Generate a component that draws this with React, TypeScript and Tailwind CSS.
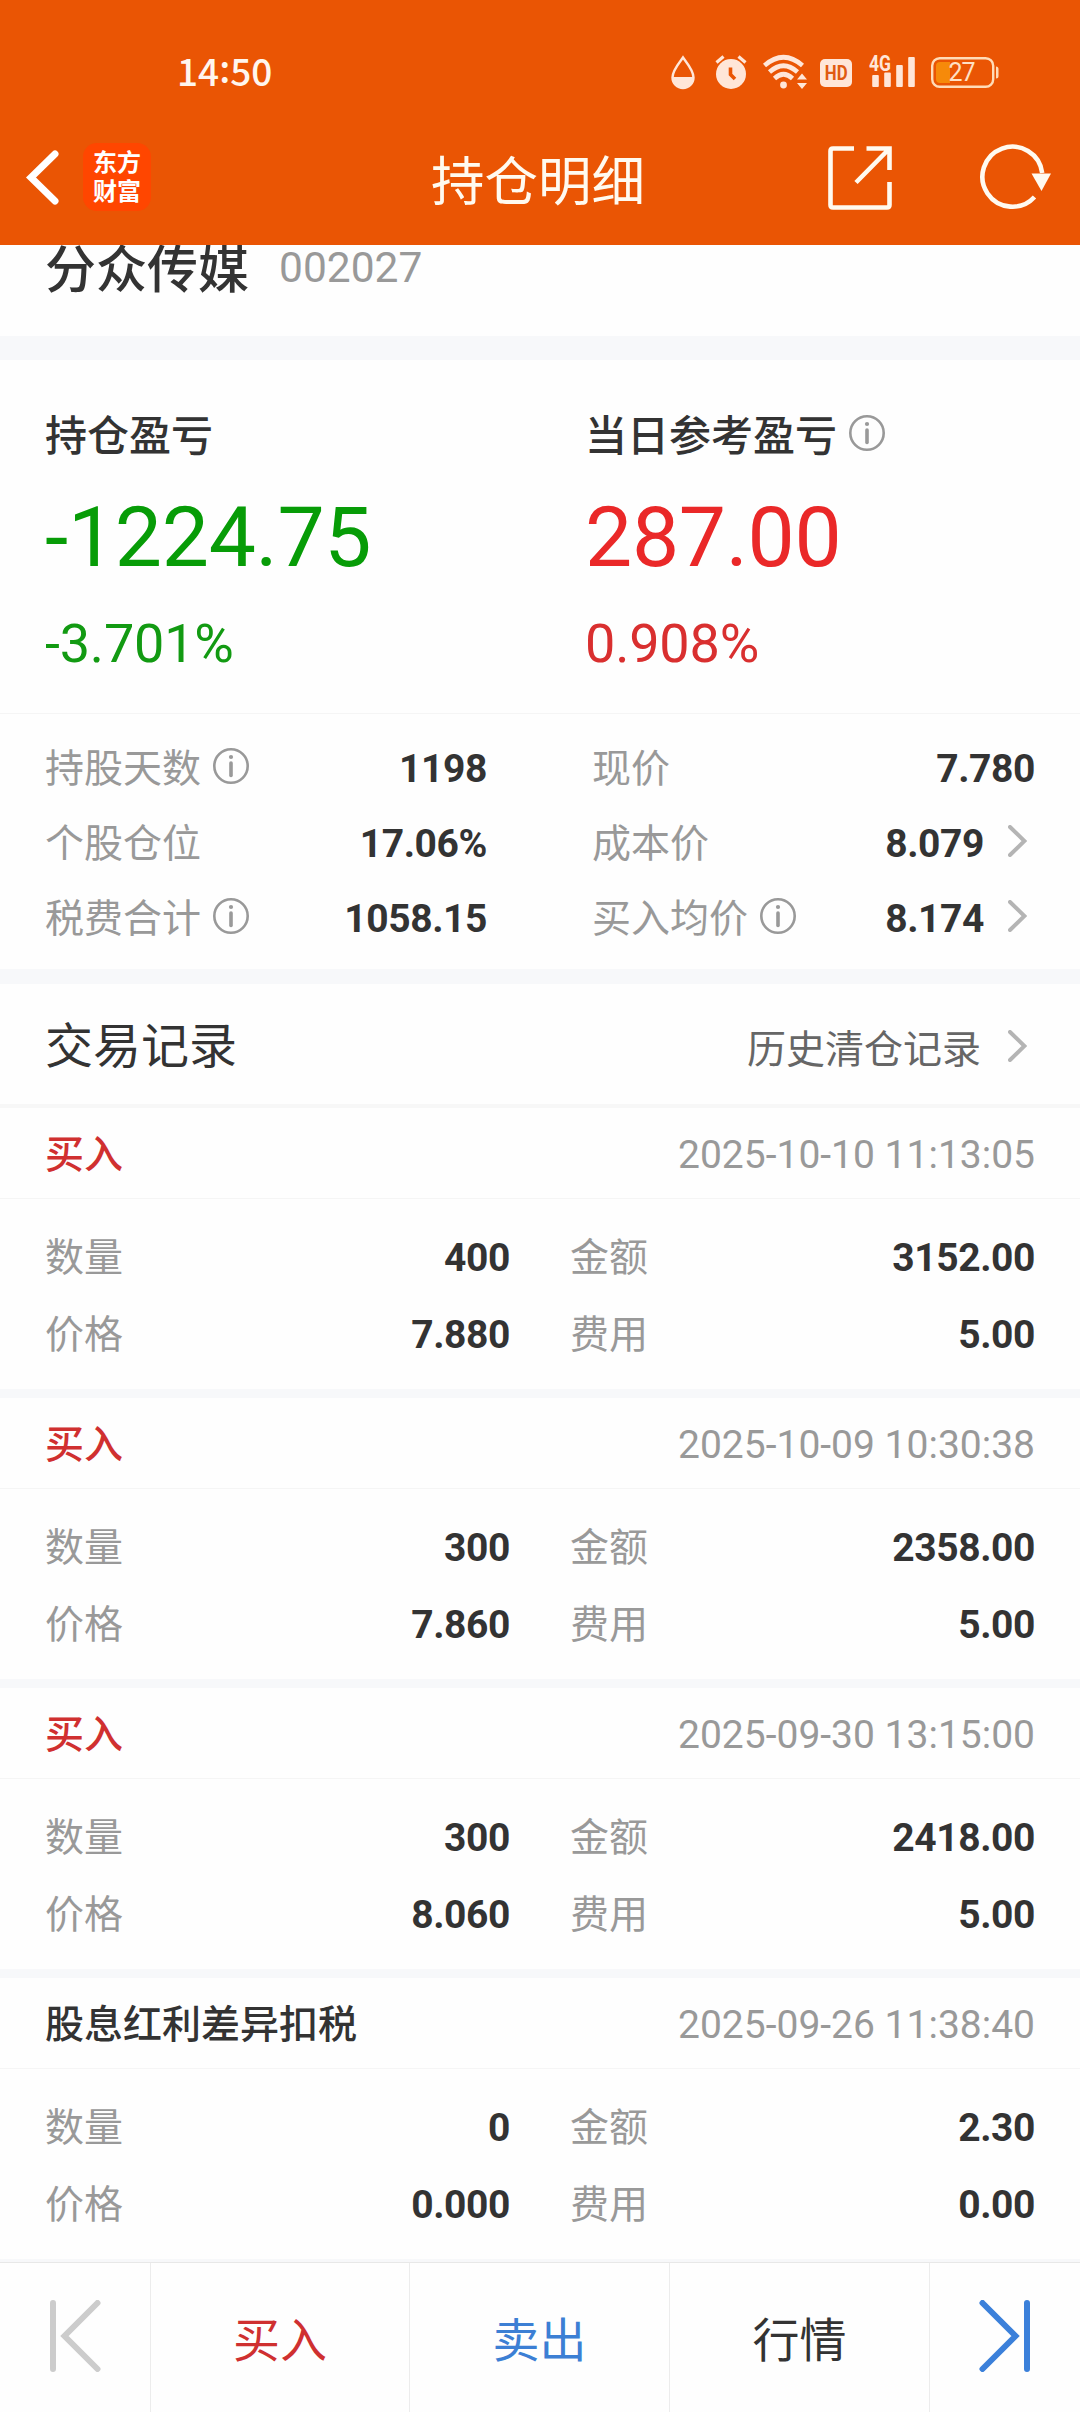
import React from "react";

type Metric = { label: string; value: string; info?: boolean; link?: boolean };

const leftMetrics: Metric[] = [
  { label: "持股天数", value: "1198", info: true },
  { label: "个股仓位", value: "17.06%" },
  { label: "税费合计", value: "1058.15", info: true },
];

const rightMetrics: Metric[] = [
  { label: "现价", value: "7.780" },
  { label: "成本价", value: "8.079", link: true },
  { label: "买入均价", value: "8.174", info: true, link: true },
];

const records = [
  { title: "买入", buy: true, time: "2025-10-10 11:13:05", qty: "400", amount: "3152.00", price: "7.880", fee: "5.00" },
  { title: "买入", buy: true, time: "2025-10-09 10:30:38", qty: "300", amount: "2358.00", price: "7.860", fee: "5.00" },
  { title: "买入", buy: true, time: "2025-09-30 13:15:00", qty: "300", amount: "2418.00", price: "8.060", fee: "5.00" },
  { title: "股息红利差异扣税", buy: false, time: "2025-09-26 11:38:40", qty: "0", amount: "2.30", price: "0.000", fee: "0.00" },
];

function InfoIcon({ className = "" }: { className?: string }) {
  return (
    <svg className={`h-9 w-9 shrink-0 ${className}`} viewBox="0 0 36 36" fill="none" stroke="#999" strokeLinecap="round">
      <circle cx="18" cy="18" r="16.7" strokeWidth="2.6" />
      <path d="M18 15V27.5" strokeWidth="3.6" />
      <circle cx="18" cy="9" r="2.1" fill="#999" stroke="none" />
    </svg>
  );
}

function ChevronRight({ className = "" }: { className?: string }) {
  return (
    <svg className={`h-8 w-[19px] shrink-0 ${className}`} viewBox="0 0 19 32" fill="none" stroke="#b4b4b4" strokeWidth="4" strokeLinecap="round">
      <path d="M2 2L16.4 16L2 30" />
    </svg>
  );
}

function StatusBar() {
  return (
    <div className="flex h-[110px] items-start pl-[177px] pt-[52px] text-[#ffe6d8]">
      <div className="mt-[-8px] w-[493px] font-['Noto_Sans_CJK_SC',sans-serif] text-[37px] font-medium leading-[52px] text-[#fff6ee]">
        14<span className="relative top-[-3px]">:</span>50
      </div>
      <svg className="h-10 w-[26px]" viewBox="0 0 26 40">
        <path d="M13 5.5C16 10 23.5 18 23.5 25.5A10.5 10.5 0 0 1 2.5 25.5C2.5 18 10 10 13 5.5Z" fill="none" stroke="currentColor" strokeWidth="2.4" />
        <path d="M2 25H24A11 11 0 0 1 2 25Z" fill="currentColor" />
      </svg>
      <svg className="ml-[18px] h-10 w-[34px]" viewBox="0 0 34 40">
        <circle cx="17" cy="22" r="15" fill="currentColor" />
        <path d="M2.5 10.5L9.5 4.5M31.5 10.5L24.5 4.5" stroke="currentColor" strokeWidth="3.2" />
        <path d="M16.5 15.5V22.5L21 27" fill="none" stroke="#ea5504" strokeWidth="3.6" />
      </svg>
      <svg className="ml-[14px] h-10 w-[46px]" viewBox="0 0 46 40">
        <g fill="none" stroke="currentColor" strokeWidth="4.6">
          <path d="M2.5 13.5Q21.5 -3 40.5 13.5" />
          <path d="M7.5 20Q21.5 7.5 35.5 20" />
          <path d="M12.5 26.5Q21.5 18 30.5 26.5" />
        </g>
        <circle cx="21.5" cy="33" r="3.4" fill="currentColor" />
        <path d="M35 27.5L40 21.5L45 27.5ZM35 31H45L40 37Z" fill="currentColor" />
      </svg>
      <div className="ml-[12px] mt-[7px] flex h-7 w-8 items-center justify-center rounded-[5px] bg-[#ffe6d8] font-[Roboto,sans-serif] text-[21px] font-bold leading-none text-[#e05a10]">
        <span className="scale-x-[0.8]">HD</span>
      </div>
      <svg className="ml-[16px] h-10 w-[48px]" viewBox="0 0 48 40" fill="currentColor">
        <text x="1" y="18.5" fontFamily="Roboto, sans-serif" fontWeight="700" fontSize="21.5" textLength="22" lengthAdjust="spacingAndGlyphs">4G</text>
        <rect x="4.2" y="23" width="6.6" height="12" rx="1" />
        <rect x="16.2" y="20.5" width="6.6" height="14.5" rx="1" />
        <rect x="28.2" y="13" width="6.6" height="22" rx="1" />
        <rect x="40.2" y="5" width="6.6" height="30" rx="1" />
      </svg>
      <svg className="ml-[14px] h-10 w-[70px]" viewBox="0 0 70 40">
        <rect x="2.2" y="6.2" width="61" height="28.6" rx="7.5" fill="none" stroke="#ffdcb8" strokeWidth="2.4" />
        <path d="M10 10H20V31H10Q6 31 6 27V14Q6 10 10 10Z" fill="#f68a0a" />
        <path d="M66 14.5Q68.500 14.5 68.5 17V24Q68.5 26.5 66 26.5Z" fill="#ffdcb8" />
        <text x="18.5" y="29.2" fontFamily="Roboto, sans-serif" fontSize="25" fill="#ffe0c4" textLength="27">27</text>
      </svg>
    </div>
  );
}

function TitleBar() {
  return (
    <div className="flex h-[135px] items-start pl-[25px] pt-[33px]">
      <svg className="mt-[6px] h-[58px] w-[35px]" viewBox="0 0 35 58" fill="none" stroke="#fff" strokeWidth="7" strokeLinecap="round">
        <path d="M30 5L6 28.500L30 52" />
      </svg>
      <div className="ml-[23px] flex h-[68px] w-[68px] flex-col items-center justify-center rounded-[14px] bg-[#ff4600] font-['Noto_Sans_CJK_SC',sans-serif] text-[24px] font-bold leading-[29px] text-white">
        <span className="mt-[-4px]">东方</span>
        <span>财富</span>
      </div>
      <h1 className="ml-[280px] mt-[8px] w-[220px] text-[53.5px] leading-[64px] text-[#fffaf0]">持仓明细</h1>
      <svg className="ml-[177px] mt-[3px] h-[64px] w-[64px]" viewBox="0 0 64 64" fill="none" stroke="#fffaf0" strokeWidth="4.6">
        <path d="M26 2.5H5Q2.5 2.5 2.5 5V59Q2.5 61.5 5 61.5H59Q61.5 61.5 61.5 59V36" />
        <path d="M38.5 2.500H61.5V24M61 3L28 36.5" />
      </svg>
      <svg className="ml-[87px] mt-[1px] h-[66px] w-[74px]" viewBox="0 0 74 66">
        <path d="M63.2 29A30 30 0 1 0 55.5 53" fill="none" stroke="#fffaf0" strokeWidth="4.6" />
        <path d="M52.500 29.500H72L62.500 47Z" fill="#fffaf0" />
      </svg>
    </div>
  );
}

function MetricRow({ m }: { m: Metric }) {
  return (
    <div className="flex h-[75px] items-center leading-[75px]">
      <span className="text-[#999]">{m.label}</span>
      {m.info && <InfoIcon className="mb-[7px] ml-3" />}
      <span className="ml-auto font-bold tracking-[-0.4px]">{m.value}</span>
      {m.link && <ChevronRight className="mb-[7px] ml-6 mr-2" />}
    </div>
  );
}

function Pair({ label, value }: { label: string; value: string }) {
  return (
    <div className="flex justify-between leading-[77px]">
      <span className="text-[#999]">{label}</span>
      <span className="font-bold tracking-[-0.4px]">{value}</span>
    </div>
  );
}

export default function App() {
  return (
    <div className="flex h-[2412px] w-[1080px] flex-col overflow-hidden bg-[#fefefe] font-[Roboto,'Noto_Sans_CJK_SC',sans-serif] text-[39px] text-[#333]">
      <header className="h-[245px] shrink-0 bg-[#ea5504]">
        <StatusBar />
        <TitleBar />
      </header>

      <main className="h-[2017px] shrink-0 overflow-hidden">
        <section className="flex h-[91px] items-start overflow-hidden pl-[45px]">
          <span className="mt-[-7px] text-[51px] font-medium leading-[66px]">分众传媒</span>
          <span className="ml-[30px] mt-[-8px] text-[42.5px] leading-[62px] text-[#999]">002027</span>
        </section>
        <div className="h-6 bg-[#f7f8fa]" />

        <section className="grid h-[354px] grid-cols-[540px_1fr] border-b border-[#f5f5f5] pl-[45px] pt-[45px]">
          <div>
            <div className="h-[64px] text-[42px] font-medium leading-[64px]">持仓盈亏</div>
            <div className="mt-[19px] text-[84px] leading-[100px] tracking-[-0.3px] text-[#079c07]">-1224.75</div>
            <div className="mt-[24px] text-[54px] leading-[64px] tracking-[-0.2px] text-[#129a12]">-3.701%</div>
          </div>
          <div>
            <div className="flex h-[64px] items-center text-[42px] font-medium leading-[64px]">
              当日参考盈亏
              <InfoIcon className="mb-[8px] ml-3" />
            </div>
            <div className="mt-[19px] text-[84px] leading-[100px] tracking-[-0.3px] text-[#ea2828]">287.00</div>
            <div className="mt-[24px] text-[54px] leading-[64px] tracking-[-0.2px] text-[#d92f2f]">0.908%</div>
          </div>
        </section>

        <section className="grid h-[255px] grid-cols-[442px_443px] justify-between pl-[45px] pr-[45px] pt-[18px]">
          <div>{leftMetrics.map((m) => <MetricRow key={m.label} m={m} />)}</div>
          <div>{rightMetrics.map((m) => <MetricRow key={m.label} m={m} />)}</div>
        </section>
        <div className="h-[15px] bg-[#f7f8fa]" />

        <section className="flex h-[124px] items-center border-b-4 border-[#f7f7f7] pl-[45px] pr-[53px]">
          <h2 className="mt-[6px] text-[48px] leading-[60px]">交易记录</h2>
          <span className="ml-auto mt-[11px] leading-[60px] text-[#666]">历史清仓记录</span>
          <ChevronRight className="ml-[27px] mt-[4px]" />
        </section>

        {records.map((r) => (
          <article key={r.time} className="h-[290px] border-b-[9px] border-[#f7f8fa]">
            <div className="flex h-[91px] justify-between border-b border-[#f5f5f5] px-[45px] pt-[3px] leading-[88px]">
              <span className={r.buy ? "font-medium text-[#d03030]" : "font-medium"}>{r.title}</span>
              <span className="text-[#999]">{r.time}</span>
            </div>
            <div className="grid grid-cols-[465px_465px] justify-between px-[45px] pt-[21px]">
              <Pair label="数量" value={r.qty} />
              <Pair label="金额" value={r.amount} />
              <Pair label="价格" value={r.price} />
              <Pair label="费用" value={r.fee} />
            </div>
          </article>
        ))}
      </main>

      <nav className="grid h-[150px] shrink-0 grid-cols-[151px_259px_260px_260px_150px] border-t border-[#e8e8e8] text-center text-[47px] leading-[156px]">
        <div className="border-r border-[#ececec] pl-[50px] pt-[37px]">
          <svg className="h-[72px] w-[52px]" viewBox="0 0 52 72" fill="none" stroke="#ccc" strokeWidth="6" strokeLinecap="round">
            <path d="M3 3V69M47.5 3L14.5 36L47.5 69" />
          </svg>
        </div>
        <div className="border-r border-[#ececec] text-[#cf3030]">买入</div>
        <div className="border-r border-[#ececec] text-[#3c7fd4]">卖出</div>
        <div className="border-r border-[#ececec]">行情</div>
        <div className="pl-[49px] pt-[37px]">
          <svg className="h-[72px] w-[52px]" viewBox="0 0 52 72" fill="none" stroke="#3b80da" strokeWidth="6" strokeLinecap="round">
            <path d="M48 3V69M3.5 3L36.5 36L3.5 69" />
          </svg>
        </div>
      </nav>
    </div>
  );
}
